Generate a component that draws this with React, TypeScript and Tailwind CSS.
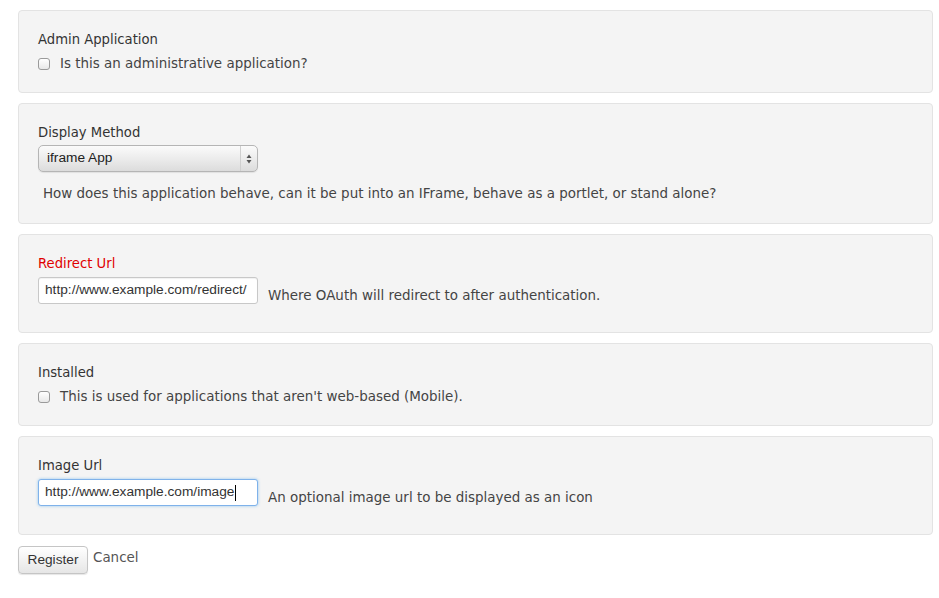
import React from "react";

const V = "font-['DejaVu_Sans','Verdana',sans-serif]";
const A = "font-['Liberation_Sans','Arial',sans-serif]";

function Checkbox() {
  return (
    <span className="inline-block w-[12px] h-[12px] rounded-[3px] border border-[#9a9a9a] bg-gradient-to-b from-white to-[#e8e8e8] shrink-0" />
  );
}

function Panel({ children }: { children: React.ReactNode }) {
  return (
    <div className="rounded-[4px] border border-[#e3e3e3] bg-[#f4f4f4] pl-[19px] pr-[19px]">
      {children}
    </div>
  );
}

function Label({ children, red }: { children: React.ReactNode; red?: boolean }) {
  return (
    <div className={`text-[13.2px] leading-[20px] ${red ? "text-[#e00000]" : "text-[#333]"}`}>{children}</div>
  );
}

function TextBox({ value, focus }: { value: string; focus?: boolean }) {
  return (
    <div
      className={`w-[220px] h-[27px] rounded-[3px] bg-white px-[6px] flex items-center text-[13.7px] text-[#333] ${A} ${
        focus
          ? "border border-[#7fb2ea] shadow-[0_0_3px_rgba(82,168,236,0.6)]"
          : "border border-[#c8c8c8] shadow-[inset_0_1px_1px_rgba(0,0,0,0.06)]"
      }`}
    >
      <span>{value}</span>
      {focus && <span className="inline-block w-px h-[16px] bg-black ml-px" />}
    </div>
  );
}

export default function App() {
  return (
    <div className={`w-[939px] h-[598px] bg-white ${V} text-[#333] px-[18px] pt-[10px]`}>
      <div className="w-[915px] flex flex-col gap-[10px]">
        <Panel>
          <div className="pt-[19px] pb-[18px]">
            <Label>Admin Application</Label>
            <div className="mt-[4px] flex items-center gap-[10px] h-[20px] text-[13.45px] text-[#444]">
              <Checkbox />
              <span>Is this an administrative application?</span>
            </div>
          </div>
        </Panel>

        <Panel>
          <div className="pt-[19px] pb-[19px]">
            <Label>Display Method</Label>
            <div className="mt-[2px] w-[220px] h-[27px] rounded-[5px] border border-[#b5b5b5] bg-gradient-to-b from-[#fbfbfb] via-[#ececec] to-[#dcdcdc] shadow-[0_1px_1px_rgba(0,0,0,0.08)] flex items-center">
              <span className={`flex-1 pl-[8px] text-[13.7px] text-[#222] ${A}`}>iframe App</span>
              <span className="w-px h-full bg-[#cfcfcf]" />
              <span className="w-[16px] flex justify-center">
                <svg width="6" height="10" viewBox="0 0 6 10">
                  <path d="M3 0.5 L5.5 4 L0.5 4 Z" fill="#555" />
                  <path d="M3 9.5 L5.5 6 L0.5 6 Z" fill="#555" />
                </svg>
              </span>
            </div>
            <div className="mt-[12px] pl-[5px] text-[13.45px] leading-[20px] text-[#444]">
              How does this application behave, can it be put into an IFrame, behave as a portlet, or stand alone?
            </div>
          </div>
        </Panel>

        <Panel>
          <div className="pt-[19px] pb-[28px]">
            <Label red>Redirect Url</Label>
            <div className="mt-[3px] flex items-end gap-[10px]">
              <TextBox value="http://www.example.com/redirect/" />
              <span className="text-[13.45px] leading-[20px] text-[#444] -mb-[2px]">Where OAuth will redirect to after authentication.</span>
            </div>
          </div>
        </Panel>

        <Panel>
          <div className="pt-[19px] pb-[18px]">
            <Label>Installed</Label>
            <div className="mt-[4px] flex items-center gap-[10px] h-[20px] text-[13.45px] text-[#444]">
              <Checkbox />
              <span>This is used for applications that aren't web-based (Mobile).</span>
            </div>
          </div>
        </Panel>

        <Panel>
          <div className="pt-[19px] pb-[28px]">
            <Label>Image Url</Label>
            <div className="mt-[3px] flex items-end gap-[10px]">
              <TextBox value="http://www.example.com/image" focus />
              <span className="text-[13.45px] leading-[20px] text-[#444] -mb-[2px]">An optional image url to be displayed as an icon</span>
            </div>
          </div>
        </Panel>
      </div>

      <div className="mt-[11px] flex items-center gap-[5px]">
        <button className={`h-[28px] w-[70px] rounded-[4px] border border-[#c5c5c5] bg-gradient-to-b from-white to-[#e6e6e6] shadow-[0_1px_1px_rgba(0,0,0,0.1)] text-[13.7px] text-[#333] ${A}`}>
          Register
        </button>
        <span className="text-[13.45px] text-[#555] -mt-[3px]">Cancel</span>
      </div>
    </div>
  );
}
